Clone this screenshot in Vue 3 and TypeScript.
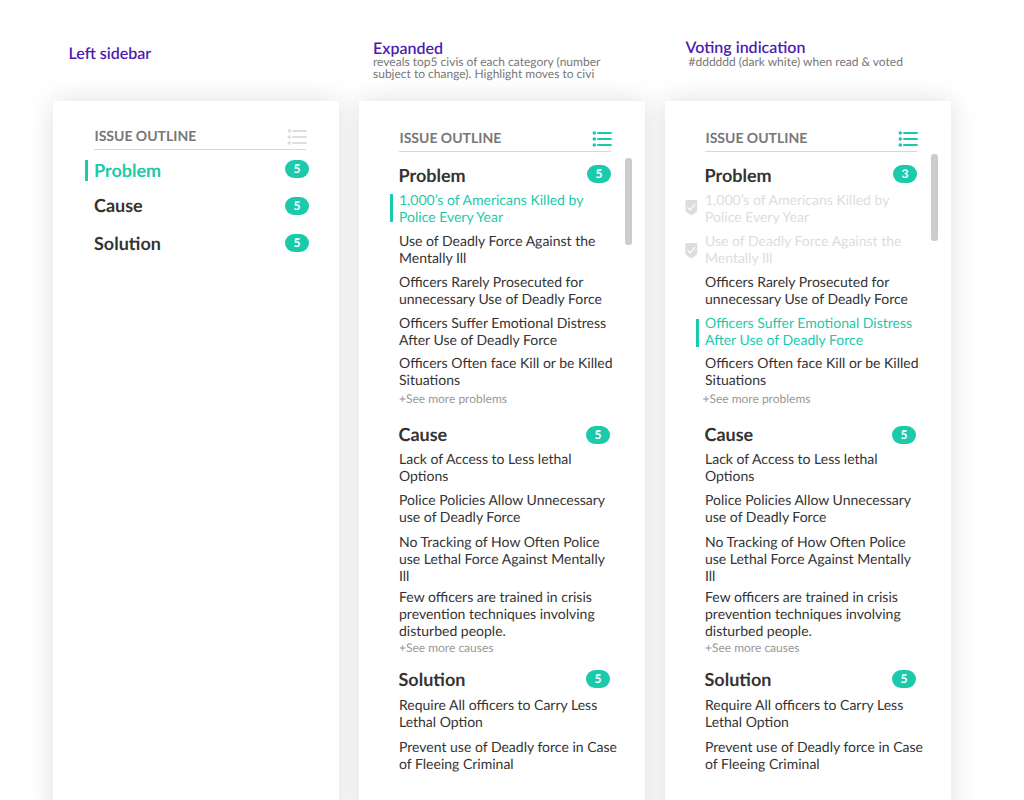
<script setup lang="ts">
interface Item {
  lines: string[]
  state?: 'active' | 'voted'
}
interface Section {
  key: string
  title: string
  count: number
  items: Item[]
  more?: string
}
interface Panel {
  key: string
  sections: Section[]
}

const collapsed = [
  { title: 'Problem', count: 5, active: true },
  { title: 'Cause', count: 5, active: false },
  { title: 'Solution', count: 5, active: false },
]

const problems = [
  ['1,000’s of Americans Killed by', 'Police Every Year'],
  ['Use of Deadly Force Against the', 'Mentally Ill'],
  ['Officers Rarely Prosecuted for', 'unnecessary Use of Deadly Force'],
  ['Officers Suffer Emotional Distress', 'After Use of Deadly Force'],
  ['Officers Often face Kill or be Killed', 'Situations'],
]
const causes = [
  ['Lack of Access to Less lethal', 'Options'],
  ['Police Policies Allow Unnecessary', 'use of Deadly Force'],
  ['No Tracking of How Often Police', 'use Lethal Force Against Mentally', 'Ill'],
  ['Few officers are trained in crisis', 'prevention techniques involving', 'disturbed people.'],
]
const solutions = [
  ['Require All officers to Carry Less', 'Lethal Option'],
  ['Prevent use of Deadly force in Case', 'of Fleeing Criminal'],
]

function buildPanel(key: string, count: number, active: number, voted: number[]): Panel {
  return {
    key,
    sections: [
      {
        key: 'problem',
        title: 'Problem',
        count,
        more: '+See more problems',
        items: problems.map((lines, i) => ({
          lines,
          state: i === active ? 'active' : voted.includes(i) ? 'voted' : undefined,
        })),
      },
      { key: 'cause', title: 'Cause', count: 5, more: '+See more causes', items: causes.map((lines) => ({ lines })) },
      { key: 'solution', title: 'Solution', count: 5, items: solutions.map((lines) => ({ lines })) },
    ],
  }
}

const panels: Panel[] = [buildPanel('expanded', 5, 0, []), buildPanel('voting', 3, 3, [0, 1])]
</script>

<template>
  <main class="board">
    <section class="column">
      <header class="note note-sidebar">
        <h2>Left sidebar</h2>
      </header>
      <article class="panel compact">
        <div class="panel-head">
          <span>ISSUE OUTLINE</span>
          <svg class="list-icon" width="20" height="18" viewBox="0 0 20 18">
            <g fill="currentColor">
              <circle cx="2.3" cy="3" r="1.8" /><circle cx="2.3" cy="9" r="1.8" /><circle cx="2.3" cy="15" r="1.8" />
              <rect x="5.2" y="1.9" width="14.5" height="2.2" rx=".6" />
              <rect x="5.2" y="7.9" width="14.5" height="2.2" rx=".6" />
              <rect x="5.2" y="13.9" width="14.5" height="2.2" rx=".6" />
            </g>
          </svg>
        </div>
        <nav class="summary">
          <div v-for="row in collapsed" :key="row.title" class="summary-row" :class="{ active: row.active }">
            <h3>{{ row.title }}</h3>
            <span class="badge">{{ row.count }}</span>
          </div>
        </nav>
      </article>
    </section>

    <section v-for="panel in panels" :key="panel.key" class="column">
      <header v-if="panel.key === 'expanded'" class="note note-expanded">
        <h2>Expanded</h2>
        <p>reveals top5 civis of each category (number<br />subject to change). Highlight moves to civi</p>
      </header>
      <header v-else class="note note-voting">
        <h2>Voting indication</h2>
        <p>#dddddd (dark white) when read &amp; voted</p>
      </header>
      <article class="panel" :class="panel.key">
        <div class="panel-head">
          <span>ISSUE OUTLINE</span>
          <svg class="list-icon" width="20" height="18" viewBox="0 0 20 18">
            <g fill="currentColor">
              <circle cx="2.3" cy="3" r="1.8" /><circle cx="2.3" cy="9" r="1.8" /><circle cx="2.3" cy="15" r="1.8" />
              <rect x="5.2" y="1.9" width="14.5" height="2.2" rx=".6" />
              <rect x="5.2" y="7.9" width="14.5" height="2.2" rx=".6" />
              <rect x="5.2" y="13.9" width="14.5" height="2.2" rx=".6" />
            </g>
          </svg>
        </div>
        <section v-for="section in panel.sections" :key="section.key" class="group" :class="section.key">
          <div class="group-head">
            <h3>{{ section.title }}</h3>
            <span class="badge">{{ section.count }}</span>
          </div>
          <ul>
            <li v-for="item in section.items" :key="item.lines[0]" :class="item.state">
              <svg v-if="item.state === 'voted'" class="shield" width="13" height="16" viewBox="0 0 13 16">
                <path d="M1.6 0h9.4a1.2 1.2 0 0 1 1.2 1.2v9.3a1.8 1.8 0 0 1-.8 1.5L6.3 15.5 1.2 12a1.8 1.8 0 0 1-.8-1.5V1.2A1.2 1.2 0 0 1 1.6 0z" fill="#ddd" />
                <path d="M2.5 7.1l2.7 2.7 5-5.6" fill="none" stroke="#fff" stroke-width="1.2" />
              </svg>
              <span v-for="line in item.lines" :key="line" class="line">{{ line }}</span>
            </li>
          </ul>
          <a v-if="section.more" class="more">{{ section.more }}</a>
        </section>
        <span class="scrollbar"></span>
      </article>
    </section>
  </main>
</template>

<style>
body {
  background: #fff;
  overflow: hidden;
}
</style>

<style scoped>
.board {
  box-sizing: border-box;
  width: 1024px;
  height: 800px;
  padding-left: 53px;
  display: grid;
  grid-template-columns: repeat(3, 286px);
  column-gap: 20px;
  overflow: hidden;
  font-family: Lato, "Liberation Sans", sans-serif;
  text-rendering: geometricPrecision;
  color: #333;
}
h2, h3, p, ul {
  margin: 0;
  padding: 0;
  list-style: none;
}
.column {
  display: grid;
  grid-template-columns: 286px;
  grid-template-rows: 101px 720px;
}
.note h2 {
  color: #4d1bb2;
  font-size: 16px;
  line-height: 20px;
  font-weight: 600;
  white-space: nowrap;
}
.note p {
  margin-top: -3px;
  color: #777;
  font-size: 12px;
  line-height: 12px;
  white-space: nowrap;
}
.note-sidebar { padding: 44px 0 0 15.5px; }
.note-expanded { padding: 39px 0 0 14px; }
.note-voting { padding: 38px 0 0 20.5px; }
.note-voting p { margin-top: -2px; padding-left: 3px; }
.panel {
  position: relative;
  box-sizing: border-box;
  padding: 26px 34px 0 40px;
  background: #fff;
  box-shadow: 0 0 25px rgba(0, 0, 0, 0.13);
}
.panel.compact { padding: 24px 33px 0 41px; }
.panel-head {
  box-sizing: border-box;
  display: flex;
  justify-content: space-between;
  height: 25px;
  border-bottom: 1px solid #d8d8d8;
  color: #777;
  font-size: 14px;
  line-height: 22px;
  font-weight: 700;
}
.panel-head span { margin-left: 0.5px; }
.list-icon {
  margin: 3px -1px 0 0;
  color: #1bcaab;
}
.compact .list-icon { color: #ddd; }
h3 {
  font-size: 18px;
  line-height: 22px;
  font-weight: 700;
}
.badge {
  width: 24px;
  height: 18px;
  border-radius: 9px;
  background: #1bcaab;
  color: #fff;
  font-size: 12px;
  line-height: 18px;
  font-weight: 700;
  text-align: center;
}
.summary { padding-top: 10px; }
.summary-row {
  position: relative;
  display: flex;
  justify-content: space-between;
  height: 37px;
  margin-right: -3px;
}
.summary-row h3 { line-height: 18px; }
.summary-row:nth-child(2) h3 { line-height: 16px; }
.summary-row.active h3 {
  line-height: 20px;
  color: #1bcaab;
}
.summary-row.active::before {
  content: "";
  position: absolute;
  left: -9px;
  top: 0;
  width: 3px;
  height: 21px;
  background: #1bcaab;
}
.group-head {
  display: flex;
  justify-content: space-between;
  height: 26px;
}
.group { box-sizing: border-box; }
.group.problem { padding-top: 13px; height: 272px; }
.group.cause { height: 246px; }
.group.cause .group-head, .group.solution .group-head { padding-right: 1px; }
.group-head h3 {
  margin-left: -0.5px;
  line-height: 20px;
}
.solution .group-head h3 { line-height: 18px; }
.cause .badge { margin-top: 2px; }
li {
  position: relative;
  margin-bottom: 7px;
  font-size: 14px;
  line-height: 17px;
}
.problem li:nth-child(4) { margin-bottom: 6px; }
.cause li:nth-child(2), .solution li { margin-bottom: 8px; }
.cause li:nth-child(3) { margin-bottom: 4px; }
.problem li:last-child { margin-bottom: 3px; }
.cause li:last-child { margin-bottom: 1px; }
.line {
  display: block;
  white-space: nowrap;
}
li.active { color: #1bcaab; }
li.voted { color: #ddd; }
li.active::before {
  content: "";
  position: absolute;
  left: -9px;
  top: 3px;
  width: 3px;
  height: 28px;
  background: #1bcaab;
}
.voting li.active::before { top: 5px; }
.shield {
  position: absolute;
  left: -19.6px;
  top: 9px;
}
li:nth-child(2) .shield { top: 10.7px; }
.more {
  display: block;
  color: #999;
  font-size: 12px;
  line-height: 15px;
}
.voting .problem .more { margin-left: -2.5px; }
.scrollbar {
  position: absolute;
  right: 13px;
  top: 57px;
  width: 7px;
  height: 87px;
  border-radius: 3px;
  background: #ccc;
}
.voting .scrollbar { top: 53px; }
</style>
